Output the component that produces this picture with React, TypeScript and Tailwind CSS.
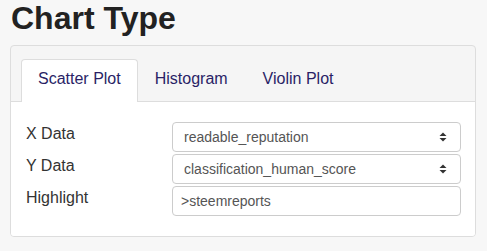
import React from "react";

function Arrows() {
  return (
    <svg width="8" height="10" viewBox="0 0 8 10" className="shrink-0">
      <path d="M4 0.5 L7.5 4 L0.5 4 Z" fill="#333" />
      <path d="M4 9.5 L7.5 6 L0.5 6 Z" fill="#333" />
    </svg>
  );
}

function SelectBox({ value }: { value: string }) {
  return (
    <div className="h-[30px] flex items-center justify-between bg-white border border-[#cccccc] rounded-[4px] pl-[11px] pr-[13px] text-[14px] text-[#555555]">
      <span>{value}</span>
      <Arrows />
    </div>
  );
}

export default function App() {
  const font = { fontFamily: '"Liberation Sans", Arial, sans-serif' };
  return (
    <div className="w-[487px] h-[251px] bg-[#f7f7f7] overflow-hidden" style={font}>
      <h1 className="ml-[11px] text-[32px] leading-[36px] font-bold text-[#222222]">Chart Type</h1>
      <div className="ml-[10px] mt-[9px] w-[466px] border border-[#dddddd] rounded-[4px] bg-[#f5f5f5] overflow-hidden">
        <div className="pt-[13px] px-[10px] border-b border-[#dddddd] flex">
          <div className="-mb-px bg-white border border-b-0 border-[#dddddd] rounded-t-[4px] px-[16px] pt-[9px] pb-[11px] text-[16px] leading-[20px] text-[#2a1f66]">
            Scatter Plot
          </div>
          <div className="border border-transparent px-[16px] pt-[9px] pb-[11px] text-[16px] leading-[20px] text-[#2a1f66]">
            Histogram
          </div>
          <div className="ml-[1px] border border-transparent px-[16px] pt-[9px] pb-[11px] text-[16px] leading-[20px] text-[#2a1f66]">
            Violin Plot
          </div>
        </div>
        <div className="bg-white pt-[20px] pb-[20px] pl-[15px] pr-[14px] grid grid-cols-[146px_1fr] gap-y-[2px] text-[#333333]">
          <div className="text-[16px] leading-[20px] pt-[2px]">X Data</div>
          <SelectBox value="readable_reputation" />
          <div className="text-[16px] leading-[20px] pt-[2px]">Y Data</div>
          <SelectBox value="classification_human_score" />
          <div className="text-[16px] leading-[20px] pt-[2px]">Highlight</div>
          <div className="h-[30px] flex items-center bg-white border border-[#cccccc] rounded-[4px] pl-[8px] text-[14px] text-[#555555]">
            &gt;steemreports
          </div>
        </div>
      </div>
    </div>
  );
}
